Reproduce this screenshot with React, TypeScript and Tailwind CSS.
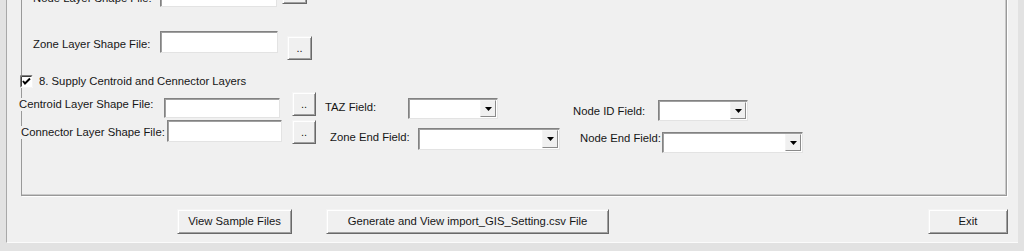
import React from "react";

const sunken =
  "bg-white border border-t-[#828282] border-l-[#828282] border-r-[#e3e3e3] border-b-[#e3e3e3] shadow-[inset_1px_1px_0_#a0a0a0]";
const raised =
  "bg-[#f0f0f0] border border-t-[#f4f4f4] border-l-[#f4f4f4] border-r-[#696969] border-b-[#696969] shadow-[inset_1px_1px_0_#ffffff,inset_-1px_-1px_0_#a0a0a0]";

function Label({ className, children }: { className: string; children: React.ReactNode }) {
  return (
    <div className={`h-[13px] shrink-0 whitespace-nowrap leading-[13px] ${className}`}>{children}</div>
  );
}

function TextBox({ className }: { className: string }) {
  return <div className={`shrink-0 ${sunken} ${className}`} />;
}

function DotButton({ className }: { className: string }) {
  return (
    <div className={`flex shrink-0 items-center justify-center pt-[1px] text-[11px] leading-[11px] ${raised} ${className}`}>
      ..
    </div>
  );
}

function Combo({ className }: { className: string }) {
  return (
    <div className={`flex shrink-0 ${sunken} ${className}`}>
      <div className="flex-1" />
      <div className="my-[1px] mr-[1px] flex w-[16px] items-center justify-center border border-t-[#f4f4f4] border-l-[#f4f4f4] border-r-[#8a8a8a] border-b-[#8a8a8a] bg-[#f0f0f0]">
        <svg width="7" height="4" viewBox="0 0 7 4">
          <path d="M0 0 H7 L3.5 4 Z" fill="#000" />
        </svg>
      </div>
    </div>
  );
}

function CheckBox() {
  return (
    <svg width="13" height="13" viewBox="0 0 13 13" className="shrink-0">
      <rect x="0" y="0" width="13" height="13" fill="#ffffff" />
      <path d="M0.5 12.5 V0.5 H12.5" stroke="#808080" fill="none" />
      <path d="M1.5 11.5 V1.5 H11.5" stroke="#404040" fill="none" />
      <path d="M0.5 12.5 H12.5 V0.5" stroke="#f4f4f4" fill="none" />
      <path d="M3 6 L5 8.5 L10 3.5" stroke="#000" strokeWidth="2" fill="none" />
    </svg>
  );
}

function BigButton({ className, children }: { className: string; children: React.ReactNode }) {
  return (
    <div className={`flex shrink-0 items-center justify-center ${raised} ${className}`}>{children}</div>
  );
}

export default function App() {
  return (
    <div className="h-[251px] w-[1024px] overflow-hidden bg-[#e2e2e2] pl-[6px] font-['Liberation_Sans',Arial,sans-serif] text-[11.3px] text-[#161616]">
      <div className="flex h-[243px] w-[1012px] flex-col border-l border-b border-l-[#a8a8a8] border-b-[#fbfbfb] bg-[#f0f0f0]">
        {/* group box */}
        <div className="ml-[14px] mt-[-24px] flex h-[220px] w-[986px] shrink-0 flex-col border border-[#999999] shadow-[1px_1px_0_#ffffff,inset_-1px_-1px_0_#c8c8c8]">
          {/* Node row */}
          <div className="flex h-[45px] shrink-0">
            <Label className="ml-[11px] mt-[15px] w-[127px]">Node Layer Shape File:</Label>
            <TextBox className="mt-[8px] h-[22px] w-[117px]" />
            <DotButton className="ml-[5px] mt-[3px] h-[24px] w-[25px]" />
          </div>
          {/* Zone row */}
          <div className="flex h-[50px] shrink-0">
            <Label className="ml-[11px] mt-[16px] w-[127px]">Zone Layer Shape File:</Label>
            <TextBox className="mt-[9px] h-[22px] w-[118px]" />
            <DotButton className="ml-[9px] mt-[14px] h-[24px] w-[25px]" />
          </div>
          {/* checkbox row */}
          <div className="flex h-[20px] shrink-0">
            <div className="ml-[-2px] mt-[3px] flex h-[13px] items-center">
              <CheckBox />
              <span className="ml-[6px] whitespace-nowrap leading-[13px]">8. Supply Centroid and Cennector Layers</span>
            </div>
          </div>
          {/* Centroid row */}
          <div className="flex h-[28px] shrink-0">
            <Label className="relative ml-[-3px] mt-[6px] w-[145px] bg-[#f0f0f0]">Centroid Layer Shape File:</Label>
            <TextBox className="mt-[6px] h-[20px] w-[116px]" />
            <DotButton className="ml-[12px] mt-0 h-[24px] w-[24px]" />
            <Label className="ml-[9px] mt-[9px] w-[83px]">TAZ Field:</Label>
            <Combo className="mt-[6px] h-[21px] w-[90px]" />
            <Label className="ml-[75px] mt-[13px] w-[85px]">Node ID Field:</Label>
            <Combo className="mt-[8px] h-[21px] w-[90px]" />
          </div>
          {/* Connector row */}
          <div className="flex h-[40px] shrink-0">
            <Label className="relative ml-[-1px] mt-[6px] w-[146px] bg-[#f0f0f0]">Connector Layer Shape File:</Label>
            <TextBox className="mt-0 h-[22px] w-[115px]" />
            <DotButton className="ml-[10px] mt-0 h-[24px] w-[24px]" />
            <Label className="ml-[14px] mt-[11px] w-[88px]">Zone End Field:</Label>
            <Combo className="mt-[8px] h-[22px] w-[142px]" />
            <Label className="ml-[20px] mt-[12px] w-[82px]">Node End Field:</Label>
            <Combo className="mt-[12px] h-[21px] w-[141px]" />
          </div>
        </div>
        {/* bottom buttons */}
        <div className="mt-[13px] flex h-[25px] shrink-0">
          <BigButton className="ml-[170px] h-[25px] w-[115px]">View Sample Files</BigButton>
          <BigButton className="ml-[34px] h-[25px] w-[283px]">Generate and View import_GIS_Setting.csv File</BigButton>
          <BigButton className="ml-[319px] h-[25px] w-[80px]">Exit</BigButton>
        </div>
      </div>
    </div>
  );
}
